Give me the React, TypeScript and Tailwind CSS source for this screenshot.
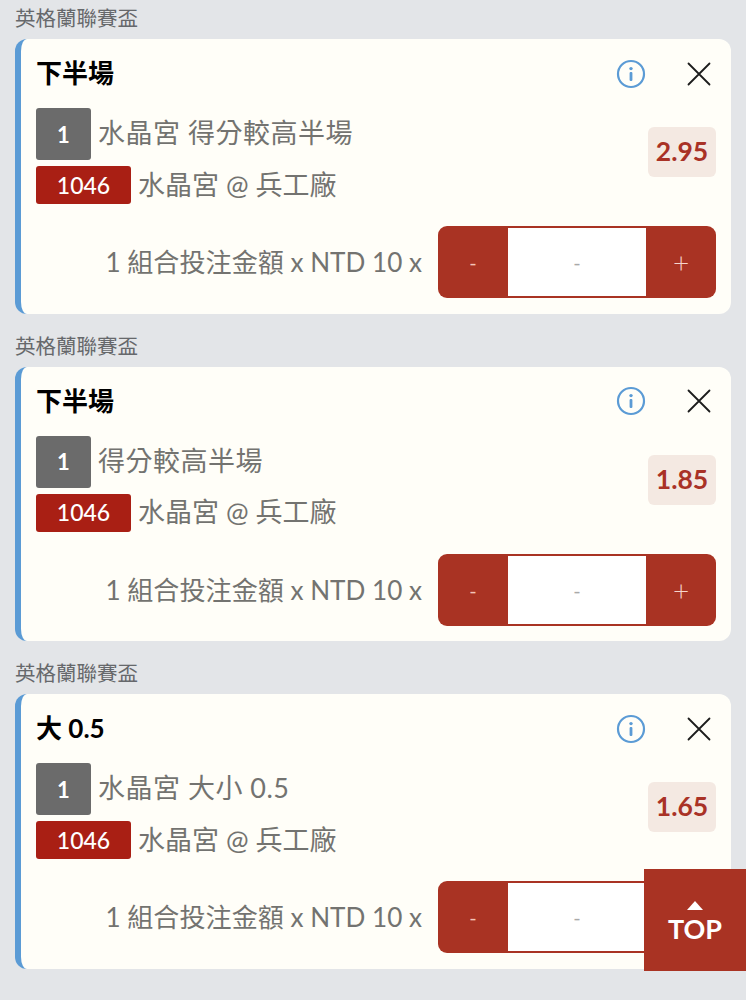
const FONT = "font-['Lato','Noto_Sans_CJK_TC','Noto_Sans',sans-serif]"

type Bet = { title: string; pick: string; odds: string }

const bets: Bet[] = [
  { title: '下半場', pick: '水晶宮 得分較高半場', odds: '2.95' },
  { title: '下半場', pick: '得分較高半場', odds: '1.85' },
  { title: '大 0.5', pick: '水晶宮 大小 0.5', odds: '1.65' },
]

function InfoIcon() {
  return (
    <svg width="30" height="30" viewBox="0 0 30 30" fill="none" className="shrink-0">
      <circle cx="15" cy="15" r="13" stroke="#5b9bd5" strokeWidth="2.2" />
      <circle cx="15" cy="9.6" r="1.7" fill="#5b9bd5" />
      <rect x="13.6" y="13" width="2.8" height="9" rx="1" fill="#5b9bd5" />
    </svg>
  )
}

function CloseIcon() {
  return (
    <svg width="24" height="24" viewBox="0 0 24 24" fill="none" className="shrink-0 ml-[41px] mr-[5px]">
      <path d="M1.5 1.5 L22.5 22.5 M22.5 1.5 L1.5 22.5" stroke="#1c1c1c" strokeWidth="1.8" strokeLinecap="round" />
    </svg>
  )
}

function BetCard({ bet }: { bet: Bet }) {
  return (
    <div>
      <div className="h-[39px] pb-[10px] flex items-end text-[20.5px] leading-[22px] text-[#66686b] pl-[15px]">
        英格蘭聯賽盃
      </div>
      <div className="mx-[15px] h-[274.5px] bg-[#fffef8] rounded-[12px] border-l-[6px] border-[#5b9bd5] pl-[15px] pr-[15px]">
        <div className="h-[69px] flex items-center">
          <div className="flex-1 text-[26px] leading-[32px] font-bold text-black pb-[1px]">{bet.title}</div>
          <InfoIcon />
          <CloseIcon />
        </div>

        <div className="flex items-start justify-between">
          <div className="flex flex-col gap-[6px]">
            <div className="flex items-start gap-[7px]">
              <div className="w-[55px] h-[52px] rounded-[3px] bg-[#6b6b6b] text-white text-[22px] font-bold flex items-center justify-center">
                1
              </div>
              <div className="text-[27px] leading-[50px] tracking-[0.5px] text-[#737370]">{bet.pick}</div>
            </div>
            <div className="flex items-center gap-[7px]">
              <div className="w-[95px] h-[38px] rounded-[3px] bg-[#a91f14] text-white text-[23px] font-medium flex items-center justify-center">
                1046
              </div>
              <div className="text-[27px] leading-[36px] pb-[1px] text-[#737370]">水晶宮 @ 兵工廠</div>
            </div>
          </div>
          <div className="mt-[19px] w-[68px] h-[50px] rounded-[6px] bg-[#f4e9e2] text-[#a93226] text-[26.5px] font-bold flex items-center justify-center">
            {bet.odds}
          </div>
        </div>

        <div className="mt-[22px] flex items-center justify-end">
          <div className="text-[26.1px] leading-[32px] text-[#737370] mr-[16px] whitespace-nowrap">
            1 組合投注金額 x NTD 10 x
          </div>
          <div className="w-[278px] h-[72px] rounded-[9px] bg-[#a93323] flex overflow-hidden">
            <div className="w-[70px] flex items-center justify-center text-[20px] text-[#f3c4b8]">-</div>
            <div className="flex-1 my-[2px] bg-white flex items-center justify-center text-[20px] text-[#a9a9a9]">-</div>
            <div className="w-[70px] flex items-center justify-center text-[28px] text-[#f6d5cc] font-light">+</div>
          </div>
        </div>
      </div>
    </div>
  )
}

export default function App() {
  return (
    <div className={`${FONT} relative min-h-screen bg-[#e3e5e8] flex flex-col gap-[14px] overflow-hidden`}>
      {bets.map((b, i) => (
        <BetCard key={i} bet={b} />
      ))}
      <button
        type="button"
        className="absolute left-[644px] top-[869px] w-[102px] h-[102px] bg-[#a93323] text-white flex flex-col items-center justify-center pt-[6px]"
      >
        <svg width="16" height="9" viewBox="0 0 16 9" fill="#fff" className="mb-[3px]">
          <path d="M8 0 L16 9 L0 9 Z" />
        </svg>
        <span className="text-[27px] leading-[32px] font-bold">TOP</span>
      </button>
    </div>
  )
}
